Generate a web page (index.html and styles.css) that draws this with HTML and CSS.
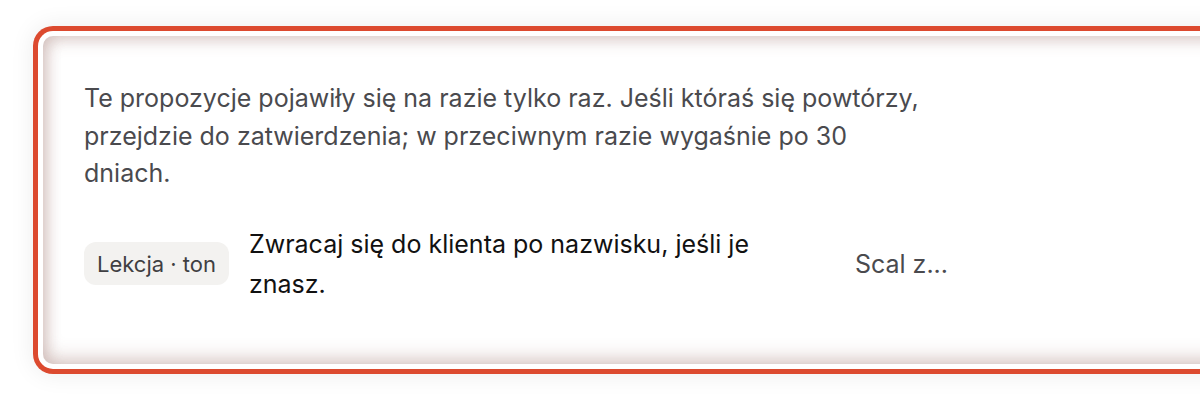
FILE: index.html
```html
<!DOCTYPE html>
<html lang="pl">
<head>
<meta charset="utf-8">
<link rel="stylesheet" href="styles.css">
</head>
<body>
<div class="stage">
  <section class="card">
    <p class="intro">Te propozycje pojawiły się na razie tylko raz. Jeśli któraś się powtórzy, przejdzie do zatwierdzenia; w przeciwnym razie wygaśnie po 30 dniach.</p>
    <div class="row">
      <span class="badge">Lekcja · ton</span>
      <span class="lesson">Zwracaj się do klienta po nazwisku, jeśli je znasz.</span>
      <button class="merge">Scal z...</button>
    </div>
  </section>
</div>
</body>
</html>
```
FILE: styles.css
```css
html {
  overflow: hidden;
}
html, body {
  margin: 0;
  padding: 0;
  background: #fff;
}
body {
  font-family: Inter, "Noto Sans", sans-serif;
  height: 400px;
}
.stage {
  padding: 36px 0 0 43px;
}
.card {
  box-sizing: border-box;
  width: 1200px;
  height: 328px;
  border-radius: 10px;
  background: #fff;
  padding: 44px 40px 0 41px;
  box-shadow:
    inset 0 -8px 18px rgba(140, 90, 80, 0.22),
    inset 0 6px 16px rgba(140, 90, 80, 0.2),
    inset 6px 0 14px rgba(140, 90, 80, 0.12),
    0 0 0 5px #fff,
    0 0 0 10px #dc4a2f,
    0 0 24px 10px rgba(0, 0, 0, 0.08);
}
.intro {
  margin: 0;
  max-width: 838px;
  font-size: 25px;
  line-height: 37.5px;
  color: #4a4a4e;
}
.row {
  margin-top: 31px;
  display: grid;
  grid-template-columns: auto 570px 1fr;
  column-gap: 20px;
  align-items: center;
  width: 864px;
}
.badge {
  background: #f3f2f0;
  color: #3f3f42;
  font-size: 22px;
  font-weight: 400;
  line-height: 26px;
  padding: 9px 13px 8px;
  border-radius: 12px;
  white-space: nowrap;
}
.lesson {
  font-size: 25px;
  line-height: 40px;
  color: #111;
}
.merge {
  font-family: inherit;
  background: none;
  border: 0;
  padding: 6px 0;
  font-size: 25px;
  color: #4a4a4e;
  justify-self: end;
}
```
